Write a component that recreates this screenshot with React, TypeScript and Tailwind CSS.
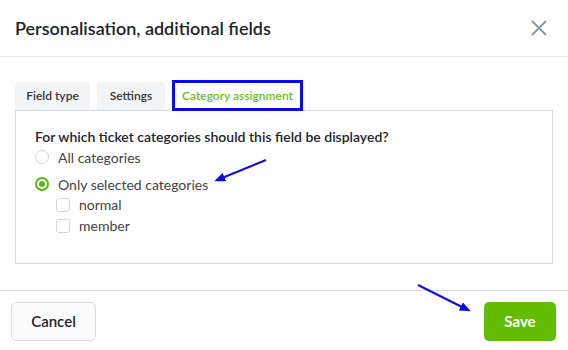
import React from 'react';

const App: React.FC = () => {
  return (
    <div className="relative w-[568px] h-[350px] bg-white overflow-hidden text-[#212529]" style={{ fontFamily: 'Lato, "Noto Sans", sans-serif' }}>
      <header className="h-[57px] px-[15px] flex items-center justify-between border-b border-[#e3e6ea]">
        <h1 className="text-[18px] font-semibold pt-[1px]">Personalisation, additional fields</h1>
        <svg width="18" height="18" viewBox="0 0 18 18" className="mr-[5px]">
          <path d="M2 2L16 16M16 2L2 16" stroke="#8a939c" strokeWidth="1.8" />
        </svg>
      </header>

      <main className="px-[15px] pt-[23px]">
        <div className="flex items-end gap-[7px] h-[30px]">
          <div className="w-[75px] h-[28px] bg-[#f3f4f6] rounded-t-[3px] flex items-center justify-center text-[12px] font-semibold text-[#333]">Field type</div>
          <div className="w-[68px] h-[28px] bg-[#f3f4f6] rounded-t-[3px] flex items-center justify-center text-[12px] font-semibold text-[#333]">Settings</div>
          <div className="w-[131px] h-[31px] -mb-[1px] bg-white border-[3px] border-[#0a0ae6] flex items-center justify-center text-[12px] font-semibold text-[#6cc117] relative z-10">Category assignment</div>
        </div>

        <section className="h-[154px] border border-[#d5dbe1] px-[19px] pt-[17px]">
          <p className="text-[14px] font-semibold leading-[18px]">For which ticket categories should this field be displayed?</p>
          <div className="mt-[1px] flex items-center gap-[9px] h-[20px] text-[14px] text-[#444]">
            <span className="w-[14px] h-[14px] rounded-full border border-[#cfd4d9] bg-white" />
            All categories
          </div>
          <div className="mt-[7px] flex items-center gap-[9px] h-[20px] text-[14px] text-[#444]">
            <span className="w-[14px] h-[14px] rounded-full border-[2px] border-[#5cb811] flex items-center justify-center">
              <span className="w-[6px] h-[6px] rounded-full bg-[#5cb811]" />
            </span>
            Only selected categories
          </div>
          <div className="pl-[21px]">
            <div className="flex items-center gap-[9px] h-[21px] text-[14px] text-[#444]">
              <span className="w-[14px] h-[14px] rounded-[3px] border border-[#cfd4d9] bg-white" />
              normal
            </div>
            <div className="flex items-center gap-[9px] h-[21px] text-[14px] text-[#444]">
              <span className="w-[14px] h-[14px] rounded-[3px] border border-[#cfd4d9] bg-white" />
              member
            </div>
          </div>
        </section>
      </main>

      <footer className="mt-[26px] border-t border-[#d5dbe1] px-[11px] pt-[11px] flex justify-between">
        <button className="w-[85px] h-[39px] rounded-[5px] border border-[#d5dbe1] bg-[#fcfcfd] text-[15px] font-semibold text-[#212529]">Cancel</button>
        <button className="mr-[1px] w-[72px] h-[39px] rounded-[5px] bg-[#62bd00] text-[15px] font-bold text-white">Save</button>
      </footer>

      <svg className="absolute left-0 top-0 pointer-events-none" width="568" height="350">
        <defs>
          <marker id="ah" markerWidth="11" markerHeight="9" refX="8" refY="4.5" orient="auto" markerUnits="userSpaceOnUse">
            <path d="M0 0L11 4.5L0 9Z" fill="#0a0ae6" />
          </marker>
        </defs>
        <line x1="266" y1="160" x2="217" y2="180" stroke="#0a0ae6" strokeWidth="2" markerEnd="url(#ah)" />
        <line x1="418" y1="285" x2="468" y2="310" stroke="#0a0ae6" strokeWidth="2" markerEnd="url(#ah)" />
      </svg>
    </div>
  );
};

export default App;
